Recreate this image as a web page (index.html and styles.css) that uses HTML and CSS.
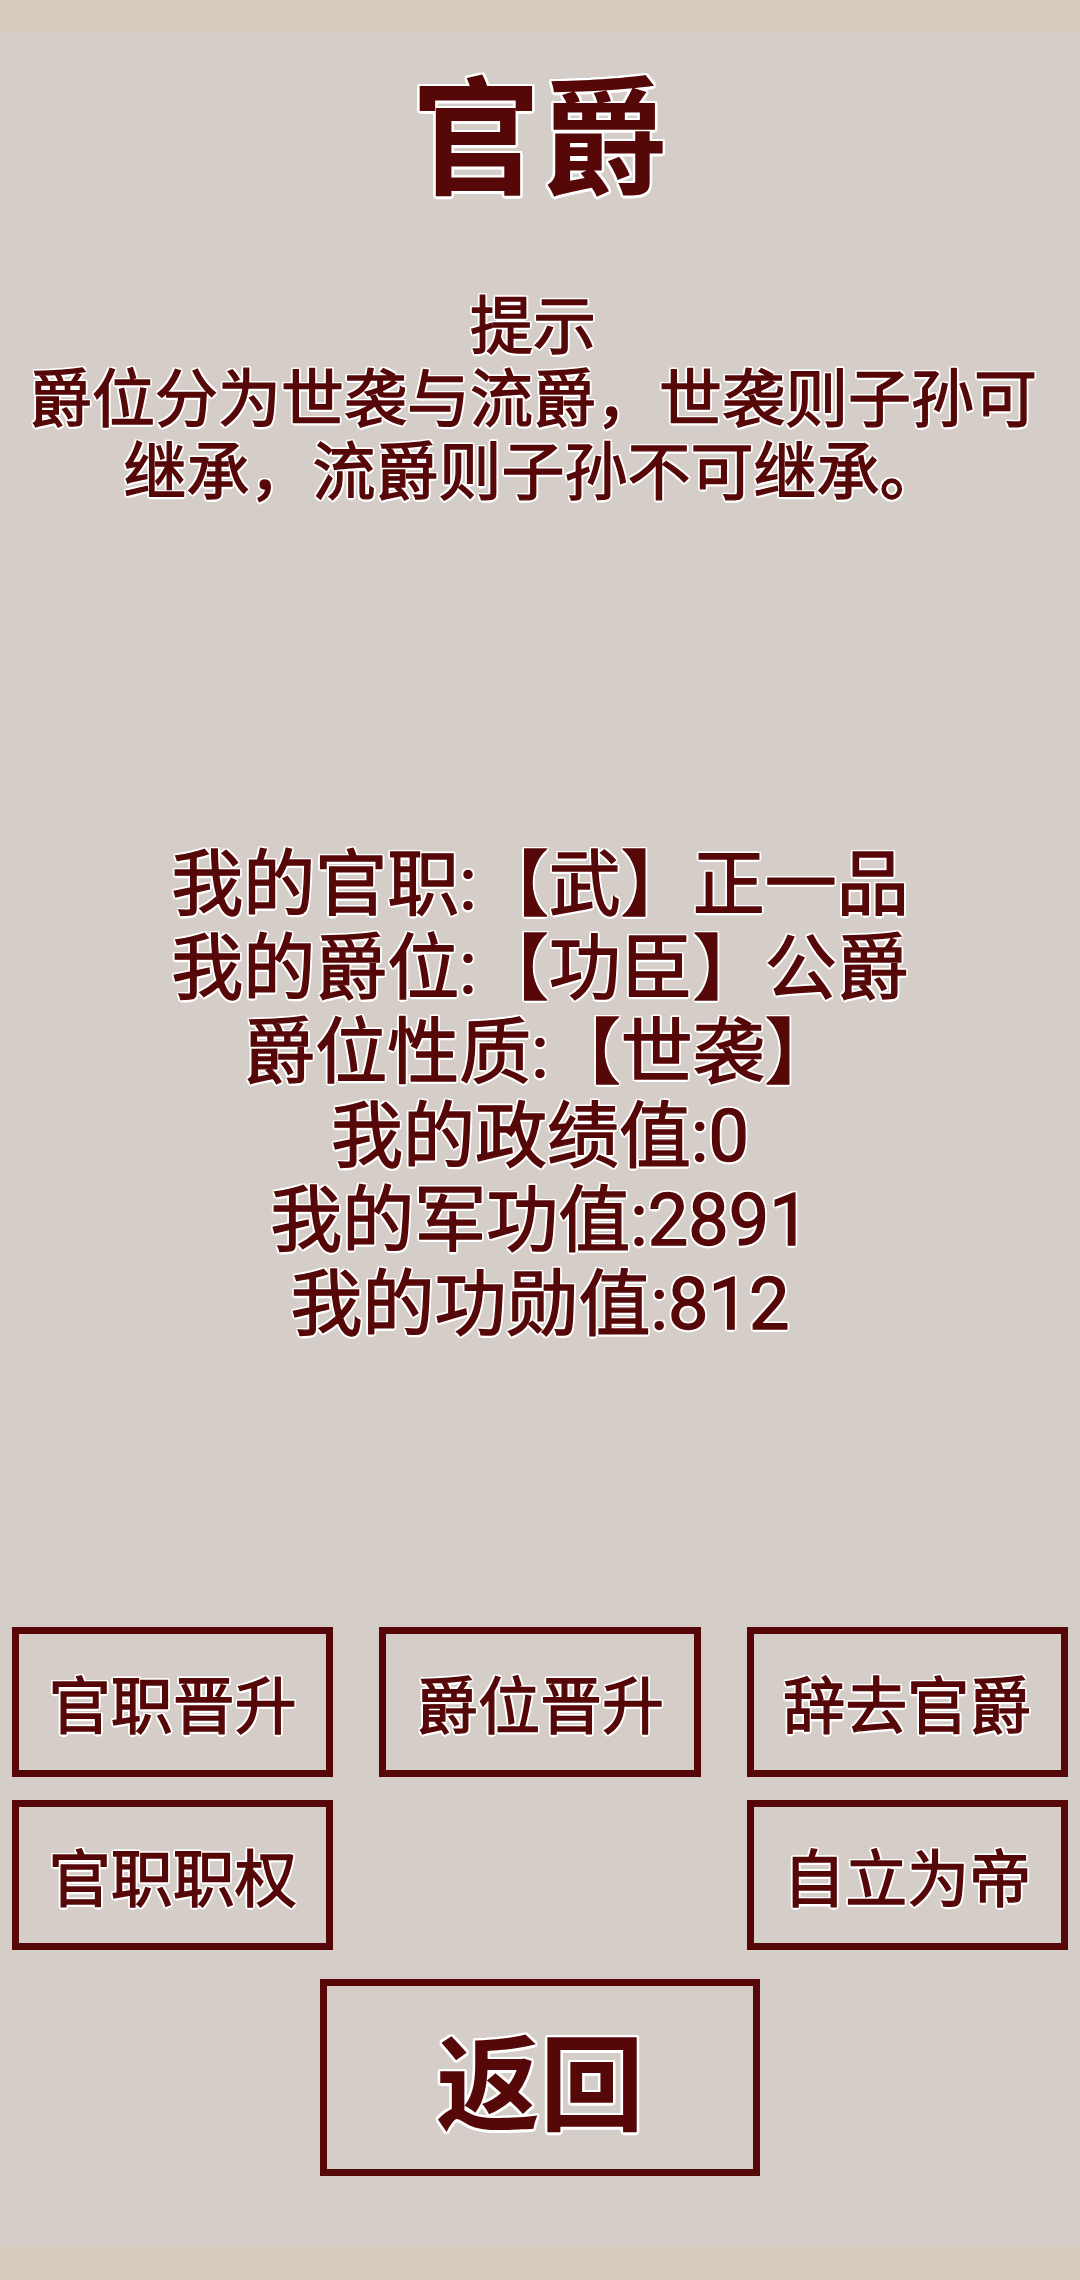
FILE: index.html
```html
<!DOCTYPE html>
<html lang="zh-CN">
<head>
<meta charset="utf-8">
<title>官爵</title>
<link rel="stylesheet" href="styles.css">
</head>
<body>
<div class="statusbar"></div>
<main class="screen">
  <h1 class="title">官爵</h1>
  <section class="hint">
    <div>提示</div>
    <div class="hint-body">爵位分为世袭与流爵，世袭则子孙可继承，流爵则子孙不可继承。</div>
  </section>
  <section class="info">
    <div>我的官职:【武】正一品</div>
    <div>我的爵位:【功臣】公爵</div>
    <div>爵位性质:【世袭】</div>
    <div>我的政绩值:0</div>
    <div>我的军功值:2891</div>
    <div>我的功勋值:812</div>
  </section>
  <section class="actions">
    <div class="btn">官职晋升</div>
    <div class="btn">爵位晋升</div>
    <div class="btn">辞去官爵</div>
    <div class="btn">官职职权</div>
    <div class="spacer"></div>
    <div class="btn">自立为帝</div>
  </section>
  <div class="back-row">
    <div class="btn back">返回</div>
  </div>
</main>
<div class="navbar"></div>
</body>
</html>
```
FILE: styles.css
```css
html, body {
  margin: 0;
  padding: 0;
}
body {
  width: 1080px;
  height: 2280px;
  background: #d5cdc7;
  font-family: "Roboto", "Noto Sans CJK SC", sans-serif;
  color: #560707;
  display: flex;
  flex-direction: column;
  overflow: hidden;
}
.statusbar {
  height: 33px;
  background: #d6ccbc;
  flex: none;
}
.navbar {
  height: 34px;
  background: #d6ccbc;
  flex: none;
}
.screen {
  flex: 1;
  display: flex;
  flex-direction: column;
  align-items: stretch;
  text-align: center;
  --o: #ffffff;
  -webkit-text-stroke: 1.4px #560707;
  text-shadow:
    -2px -2px 0 var(--o), 2px -2px 0 var(--o), -2px 2px 0 var(--o), 2px 2px 0 var(--o),
    0 -2.5px 0 var(--o), 0 2.5px 0 var(--o), -2.5px 0 0 var(--o), 2.5px 0 0 var(--o);
}
.title {
  margin: 44px 0 0;
  font-size: 128px;
  line-height: 128px;
  font-weight: 700;
  -webkit-text-stroke: 0;
}
.hint {
  margin-top: 85px;
  padding: 0 20px 0 6px;
  font-size: 63px;
  line-height: 73px;
}
.info {
  margin-top: 334px;
  font-size: 72px;
  line-height: 84px;
}
.actions {
  margin-top: 280px;
  padding: 0 12px;
  display: grid;
  grid-template-columns: repeat(3, 1fr);
  column-gap: 46px;
  row-gap: 23px;
}
.btn {
  height: 150px;
  box-sizing: border-box;
  border: 7px solid #560707;
  display: flex;
  align-items: center;
  justify-content: center;
  font-size: 62px;
}
.back-row {
  margin-top: 29px;
  display: flex;
  justify-content: center;
}
.btn.back {
  width: 440px;
  height: 197px;
  font-size: 104px;
  font-weight: 700;
  -webkit-text-stroke: 0;
}
```
